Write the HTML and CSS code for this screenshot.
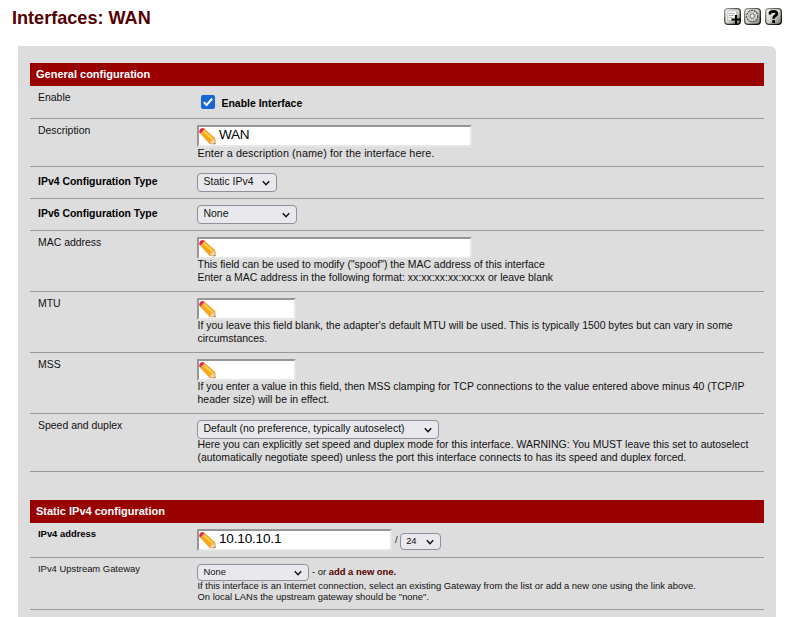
FILE: index.html
```html
<!DOCTYPE html>
<html lang="en">
<head>
<meta charset="utf-8">
<title>Interfaces: WAN</title>
<link rel="stylesheet" href="styles.css">
</head>
<body>
<svg class="defs" aria-hidden="true">
  <defs>
    <linearGradient id="metal" x1="0" y1="0" x2="1" y2="1"><stop offset="0" stop-color="#fff"/><stop offset=".5" stop-color="#d4d4cc"/><stop offset="1" stop-color="#77776f"/></linearGradient>
    <linearGradient id="rim" x1="0" y1="0" x2="1" y2="1"><stop offset="0" stop-color="#999"/><stop offset=".5" stop-color="#444"/><stop offset="1" stop-color="#000"/></linearGradient>
    <symbol id="pencil" viewBox="0 0 17 17">
      <path d="M.3 4.4 4.3.1 16 10.3 16.3 16 10.7 15.6z" fill="#fba718" stroke="#d58a2a" stroke-width=".5"/>
      <path d="M4.8 3.2 14 11.4" stroke="#ffcf4e" stroke-width="2"/>
      <path d="m10.9 15.5.9-2.6 3.6-2.4.8 5.4z" fill="#f5d3a3" stroke="#c99a68" stroke-width=".4"/>
      <path d="m14.8 15.8 1-1.1.6 1.3z" fill="#7a6350"/>
      <path d="M.2 4.3Q.1.2 4.2.1L5.4 1.7 1.9 5.6z" fill="#e0294c"/>
      <path d="m2 5.6 3.4-3.8" stroke="#dcbfa8" stroke-width=".9"/>
    </symbol>
    <symbol id="chevron" viewBox="0 0 10 10"><path d="m1.8 3.3 3.2 3.4 3.2-3.4" fill="none" stroke="#111" stroke-width="1.5"/></symbol>
  </defs>
</svg>
<header class="top">
  <h1>Interfaces: WAN</h1>
  <nav class="tools">
    <svg viewBox="0 0 17 17"><rect x=".7" y=".7" width="15.6" height="15.6" rx="3" fill="url(#metal)" stroke="url(#rim)" stroke-width="1.3"/><path d="M4 3h8.5v9.5H4z" fill="#fff" stroke="#aaa" stroke-width=".6"/><path d="M5 5.5h6M5 7.5h5M5 9.5h3" stroke="#999" stroke-width=".8"/><path d="M12 7v9M7.5 11.5h9" stroke="#000" stroke-width="2.2"/></svg>
    <svg viewBox="0 0 17 17"><rect x=".7" y=".7" width="15.6" height="15.6" rx="3" fill="url(#metal)" stroke="url(#rim)" stroke-width="1.3"/><circle cx="8.2" cy="8" r="5.6" fill="#eee" stroke="#555" stroke-width="1.3" stroke-dasharray="2.5 .5"/><circle cx="8.2" cy="8" r="3.5" fill="none" stroke="#c2c2bc" stroke-width="1.6"/><circle cx="8.2" cy="8" r="2.2" fill="#f8f8f8" stroke="#666"/></svg>
    <svg viewBox="0 0 17 17"><rect x=".7" y=".7" width="15.6" height="15.6" rx="3" fill="url(#metal)" stroke="url(#rim)" stroke-width="1.3"/><path d="M5 6.6V5Q5.2 3.4 8.5 3.4t3.4 2.4Q11.8 7.3 9.9 8 8.6 8.7 8.6 10.8" fill="none" stroke="#000" stroke-width="2.6"/><path d="M7.2 12.2H10v2.7H7.2z"/></svg>
  </nav>
</header>
<main class="panel">
  <section class="group">
    <h2>General configuration</h2>
    <div class="row enable">
      <div class="label">Enable</div>
      <div class="value check"><span class="box"><svg viewBox="0 0 14 14"><path d="m2.8 7.2 2.8 2.8 5.6-6.3" fill="none" stroke="#fff" stroke-width="2"/></svg></span><b>Enable Interface</b></div>
    </div>
    <div class="row desc">
      <div class="label">Description</div>
      <div class="value"><div class="input wide"><svg><use href="#pencil"/></svg><span>WAN</span></div><p>Enter a description (name) for the interface here.</p></div>
    </div>
    <div class="row type">
      <div class="label strong">IPv4 Configuration Type</div>
      <div class="value"><div class="select s-v4"><span>Static IPv4</span><svg><use href="#chevron"/></svg></div></div>
    </div>
    <div class="row type">
      <div class="label strong">IPv6 Configuration Type</div>
      <div class="value"><div class="select s-v6"><span>None</span><svg><use href="#chevron"/></svg></div></div>
    </div>
    <div class="row tall">
      <div class="label">MAC address</div>
      <div class="value"><div class="input wide"><svg><use href="#pencil"/></svg></div><p>This field can be used to modify ("spoof") the MAC address of this interface<br>Enter a MAC address in the following format: xx:xx:xx:xx:xx:xx or leave blank</p></div>
    </div>
    <div class="row tall">
      <div class="label">MTU</div>
      <div class="value"><div class="input short"><svg><use href="#pencil"/></svg></div><p>If you leave this field blank, the adapter's default MTU will be used. This is typically 1500 bytes but can vary in some<br>circumstances.</p></div>
    </div>
    <div class="row tall">
      <div class="label">MSS</div>
      <div class="value"><div class="input short"><svg><use href="#pencil"/></svg></div><p>If you enter a value in this field, then MSS clamping for TCP connections to the value entered above minus 40 (TCP/IP<br>header size) will be in effect.</p></div>
    </div>
    <div class="row speed">
      <div class="label">Speed and duplex</div>
      <div class="value"><div class="select s-speed"><span>Default (no preference, typically autoselect)</span><svg><use href="#chevron"/></svg></div><p>Here you can explicitly set speed and duplex mode for this interface. WARNING: You MUST leave this set to autoselect<br>(automatically negotiate speed) unless the port this interface connects to has its speed and duplex forced.</p></div>
    </div>
  </section>
  <section class="group small">
    <h2>Static IPv4 configuration</h2>
    <div class="row addr">
      <div class="label strong">IPv4 address</div>
      <div class="value line"><div class="input mid"><svg><use href="#pencil"/></svg><span>10.10.10.1</span></div><span class="slash">/</span><div class="select s-mask"><span>24</span><svg><use href="#chevron"/></svg></div></div>
    </div>
    <div class="row gateway">
      <div class="label">IPv4 Upstream Gateway</div>
      <div class="value"><div class="line"><div class="select s-gw"><span>None</span><svg><use href="#chevron"/></svg></div><span class="or">- or <a>add a new one.</a></span></div><p>If this interface is an Internet connection, select an existing Gateway from the list or add a new one using the link above.<br>On local LANs the upstream gateway should be "none".</p></div>
    </div>
  </section>
</main>
</body>
</html>
```
FILE: styles.css
```css
* { box-sizing: border-box; }
body { margin: 0; height: 617px; overflow: hidden; background: #fff; color: #111; font: 10.46px/13px "Liberation Sans", Arial, sans-serif; }
h1, h2, p { margin: 0; }
svg { display: block; flex: none; }
.defs { position: absolute; width: 0; height: 0; }
.top { display: flex; justify-content: space-between; height: 46px; padding: 8px 12px 0; }
h1 { font-size: 18.1px; line-height: 20px; color: #500; }
.tools { display: flex; gap: 3px; }
.tools svg { width: 17px; height: 17px; }
.tools svg:last-child { margin-left: 1px; }
.panel { width: 758px; height: 600px; margin-left: 18px; padding: 17px 12px 0; background: #ddd; border-top-right-radius: 6px; }
.group { width: 734px; margin-bottom: 28px; }
h2 { width: 733.5px; height: 23px; padding-left: 6px; background: #900; color: #fff; font-size: 11px; line-height: 23px; }
.row { display: grid; grid-template-columns: 167px 1fr; border-bottom: 1px solid #999; white-space: nowrap; }
.row p { padding-left: .5px; }
.label { padding: 5px 0 0 8px; }
.strong, .check b { font-weight: bold; color: #000; }
.value { padding-top: 6px; }
.enable { height: 33px; }
.check { display: flex; padding: 9px 0 0 4px; gap: 6.5px; }
.check b { padding-top: 2px; }
.box { width: 14px; height: 14px; border-radius: 2px; background: #1967d2; }
.desc { height: 48px; }
.desc p { font-size: 10.8px; letter-spacing: .08px; }
.type { height: 32px; }
.type .label { padding-top: 8px; }
.tall { height: 61px; }
.tall p, .speed p { margin-top: -1px; }
.speed { height: 58px; }
.input { display: flex; height: 22px; background: #fff; border: 2px solid; border-color: #969696 #e6e6e6 #e6e6e6 #969696; color: #000; font-size: 13.6px; line-height: 16px; letter-spacing: -.35px; }
.input svg { width: 17px; height: 17px; margin-top: 1px; }
.input span { padding-left: 3px; }
.mid span { letter-spacing: -.2px; }
.wide { width: 275px; }
.short { width: 99px; }
.mid { width: 195px; }
.select { display: flex; justify-content: space-between; height: 19px; padding: 0 5px 0 5.5px; border: 1px solid #8f8f9d; border-radius: 4px; background: #e9e9ed; line-height: 16px; color: #111; }
.select svg { width: 10px; height: 10px; margin-top: 4px; }
.s-v4 { width: 80px; }
.s-v6 { width: 100px; }
.s-speed { width: 242px; }
.small .row { font-size: 9.42px; line-height: 11px; }
.small .select { height: 17px; line-height: 13px; }
.small .select svg { margin-top: 3px; }
.small .s-gw { line-height: 14px; }
.line { display: flex; }
.addr { height: 35px; }
.slash { padding: 5px 2px 0 3px; }
.s-mask { width: 41px; margin-top: 4px; }
.gateway { height: 52px; }
.gateway .label, .addr .label { padding-top: 5px; }
.gateway p { margin-top: -1px; }
.s-gw { width: 112px; }
.or { padding: 2px 0 0 3px; }
.or a { color: #500; font-weight: bold; }
```
